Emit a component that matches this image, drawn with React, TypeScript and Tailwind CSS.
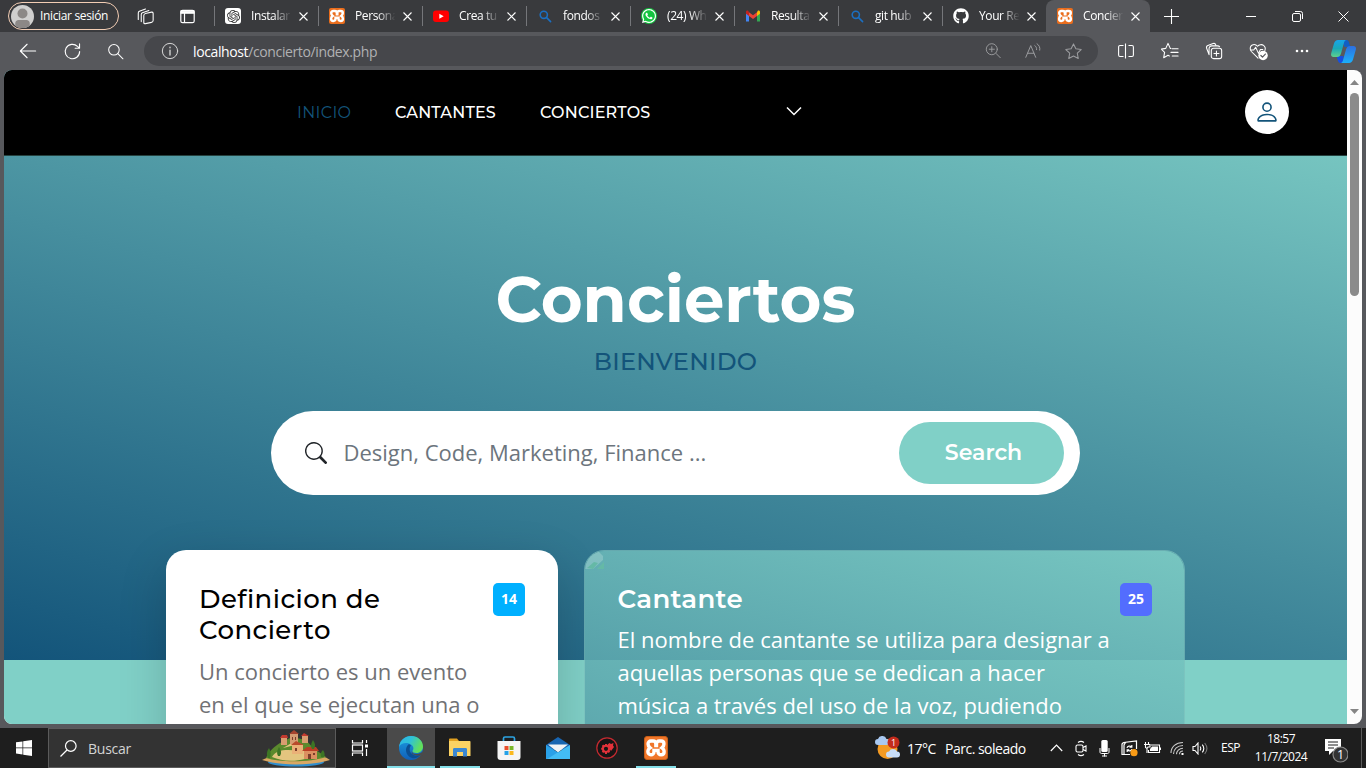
import React from "react";
import { SiOpenai } from "react-icons/si";
import { FaGithub, FaWhatsapp } from "react-icons/fa";
import { BsSearch, BsPerson } from "react-icons/bs";

type Kids = { children?: React.ReactNode };

function Ico({ s = 20, w = 1.1, className = "", children }: { s?: number; w?: number; className?: string } & Kids) {
  return (
    <svg width={s} height={s} viewBox="0 0 20 20" fill="none" stroke="currentColor" strokeWidth={w} strokeLinecap="round" strokeLinejoin="round" className={"shrink-0 " + className}>
      {children}
    </svg>
  );
}

function Xampp({ size }: { size: "sm" | "lg" }) {
  return (
    <span className={size === "sm" ? "flex size-4 items-center justify-center rounded-[2px] bg-[#ea6d1c] text-white" : "flex size-6 items-center justify-center rounded-[3px] border border-[#c95f17] bg-[#f0762a] text-white"}>
      <svg viewBox="1.5 1.5 13 13" className={size === "sm" ? "size-4" : "size-[22px]"} fill="none" stroke="white" strokeWidth="2">
        <path d="M5 3.900h1.300c1 0 1.600.7 1.600 1.700v.9h.4v-.9c0-1 .6-1.700 1.600-1.700H11c1 0 1.700.7 1.700 1.700 0 1-.5 1.700-1.200 2.300.8.5 1.300 1.300 1.300 2.300 0 1.100-.8 1.800-1.800 1.800s-1.800-.7-1.800-1.700V9.400H6.800v.9c0 1-.8 1.700-1.800 1.700s-1.800-.8-1.800-1.800c0-1 .5-1.800 1.300-2.300-.7-.6-1.200-1.300-1.200-2.300 0-1 .7-1.700 1.700-1.700z" />
      </svg>
    </span>
  );
}

const BlueSearch = () => (
  <Ico s={16} w={2} className="text-[#1b6fc2]"><circle cx="8.500" cy="8.500" r="4.500" /><path d="M12 12l5 5" /></Ico>
);

const tabs = [
  { title: "Instalar", icon: <span className="flex size-4 items-center justify-center rounded-[3px] bg-white text-[#333]"><SiOpenai size={13} /></span> },
  { title: "Persona", icon: <Xampp size="sm" /> },
  { title: "Crea tu", icon: <svg width="16" height="16" viewBox="0 0 16 16"><rect y="2.500" width="16" height="11.500" rx="3" fill="#f00" /><path d="M6.300 5.700l4.400 2.500-4.400 2.500z" fill="#fff" /></svg> },
  { title: "fondos", icon: <BlueSearch /> },
  { title: "(24) Wh", icon: <span className="flex size-4 items-center justify-center rounded-full bg-[#13c43f] text-white"><FaWhatsapp size={16} /></span> },
  { title: "Resulta", icon: <svg width="16" height="16" viewBox="0 0 16 16"><path d="M1 4v9.500h3V7L1 4z" fill="#4285f4" /><path d="M12 7v6.500h3V4l-3 3z" fill="#34a853" /><path d="M12 4.200V8l3-2.300V4c0-1.300-1.300-1.800-2.200-1.200z" fill="#fbbc04" /><path d="M4 8V4.200l4 3 4-3V8l-4 3z" fill="#ea4335" /><path d="M1 5.700L4 8V4.200L3.200 2.800C2.300 2.200 1 2.700 1 4z" fill="#c5221f" /></svg> },
  { title: "git hub", icon: <BlueSearch /> },
  { title: "Your Re", icon: <FaGithub size={16} className="text-white" /> },
];

const Close = () => <svg width="9" height="9" viewBox="0 0 9 9" stroke="white" strokeWidth="1.100" className="shrink-0"><path d="M.5.5l8 8M8.500.5l-8 8" /></svg>;

function TabBody({ title, icon }: { title: string; icon: React.ReactNode }) {
  return (
    <>
      <span className="flex w-4 shrink-0 justify-center">{icon}</span>
      <span className="ml-2.5 w-[45px] text-[12px] tracking-[-0.4px] whitespace-nowrap [mask-image:linear-gradient(to_right,black_50%,transparent_90%)]">{title}</span>
      <span className="ml-[3px]"><Close /></span>
    </>
  );
}

function TabStrip() {
  return (
    <div className="flex h-8 items-center bg-[#393a3d] text-white">
      <div className="ml-2 flex h-7 w-[111px] items-center rounded-full border border-[#f3cdb4] pl-[2px]">
        <svg width="23" height="23" viewBox="0 0 23 23"><clipPath id="av"><circle cx="11.500" cy="11.500" r="11.500" /></clipPath><g clipPath="url(#av)"><rect width="23" height="23" fill="#d0cfce" /><circle cx="11.500" cy="8.500" r="5" fill="#8c8886" /><path d="M5 23c-2-6 0-8 3-8h7c3 0 5 2 3 8z" fill="#8c8886" /></g></svg>
        <span className="ml-[6px] text-[12px] tracking-[-0.35px] whitespace-nowrap">Iniciar sesión</span>
      </div>
      <span className="ml-[16px] flex w-5 justify-center"><Ico s={17} w={1.250}>
        <rect x="8" y="6" width="11" height="12" rx="2" transform="skewY(-12) translate(0 2.500)" /><path d="M5 16V7.500c0-1 .5-1.700 1.400-2L14 3M1.500 13.500V5.800c0-1 .5-1.600 1.300-1.900L10 1.200" />
      </Ico></span>
      <span className="ml-[22px] flex w-5 justify-center"><svg width="15" height="15" viewBox="0 0 15 15" fill="none" stroke="white" strokeWidth="1.200"><rect x=".8" y="1.300" width="13.400" height="12.400" rx="1.800" /><path d="M1 2.200h13v2H1z" fill="white" /><path d="M4.500 4v10" /></svg></span>
      <div className="ml-[17px] flex">
        {tabs.map((t) => (
          <div key={t.title} className="flex h-8 w-[104px] items-center">
            <span className="mr-[10px] h-5 w-px bg-[#75767a]" />
            <TabBody {...t} />
          </div>
        ))}
      </div>
      <div className="flex h-8 w-[104px] items-center rounded-t-[8px] bg-[#57585c] pl-[11px]">
        <TabBody title="Concier" icon={<Xampp size="sm" />} />
      </div>
      <svg width="15" height="15" viewBox="0 0 15 15" stroke="white" strokeWidth="1.100" className="ml-[14px]"><path d="M7.500 0v15M0 7.500h15" /></svg>
      <svg width="10" height="10" viewBox="0 0 10 10" stroke="white" strokeWidth="1" className="ml-[67px]"><path d="M0 5.500h10" /></svg>
      <svg width="11" height="11" viewBox="0 0 11 11" fill="none" stroke="white" className="ml-[36px]"><rect x=".5" y="2.500" width="8" height="8" rx="1.500" /><path d="M3 .5h5.500a2 2 0 0 1 2 2V8" /></svg>
      <svg width="11" height="11" viewBox="0 0 11 11" stroke="white" className="ml-[35px]"><path d="M.5.5l10 10M10.500.5l-10 10" /></svg>
    </div>
  );
}

const Slot = ({ children }: Kids) => <span className="flex w-11 shrink-0 items-center justify-center">{children}</span>;
const STAR = "M10 2l2.500 5.100 5.600.8-4.100 3.900 1 5.600-5-2.700-5 2.700 1-5.600L1.900 7.900l5.600-.8z";

function AddressBar() {
  return (
    <div className="flex h-[38px] items-center bg-[#57585c] pl-1.5 text-white">
      <Slot><Ico s={18} w={1.200}><path d="M18.500 10H1.500M9 2.500L1.500 10 9 17.500" /></Ico></Slot>
      <Slot><Ico s={19} w={1.200}><path d="M17.500 10a7.600 7.600 0 1 1-2.300-5.400L17.300 6.500M17.400 2v4.600h-4.600" /></Ico></Slot>
      <Slot><Ico s={17} w={1.200}><circle cx="7" cy="8" r="6.200" /><path d="M11.600 12.600l6 6" /></Ico></Slot>
      <div className="ml-1.5 flex h-[30px] w-[954px] items-center rounded-full bg-[#46474b] pl-[17px]">
        <Ico s={18} w={1.100} className="text-[#d8d8d8]"><circle cx="10" cy="10" r="8.500" /><path d="M10 9v5.500M10 5.800v.6" strokeWidth="1.500" /></Ico>
        <span className="ml-[14px] text-[14px] tracking-[-0.38px] text-[#b0b1b3]"><span className="text-white">localhost</span>/concierto/index.php</span>
        <div className="ml-auto flex w-[120px] text-[#9b9c9f]">
          <span className="flex w-[30px] justify-center"><Ico s={17}><circle cx="8" cy="8.500" r="6.500" /><path d="M13 13.500l5 5M8 5.500v6M5 8.500h6" /></Ico></span>
          <span className="ml-[10px] flex w-[30px] justify-center"><Ico s={18}><path d="M2 17L7.500 4l5.500 13M4 12.500h7M12 4c1.500 1 2.200 2.500 2 4.500M14.500 2c2.500 1.700 3.500 4 3 7" /></Ico></span>
          <span className="ml-[10px] flex w-[30px] justify-center"><Ico s={19}><path d={STAR} /></Ico></span>
        </div>
      </div>
      <span className="ml-1.5 flex">
        <Slot><svg width="16" height="16" viewBox="0 0 16 16" fill="none" stroke="white" strokeWidth="1.100"><path d="M5.500 2.500H2c-.8 0-1.400.6-1.400 1.400v8.200c0 .8.6 1.400 1.400 1.400h3.500M10.500 2.500H14c.8 0 1.400.6 1.400 1.400v8.200c0 .8-.6 1.400-1.400 1.400h-3.500M7.500 .5v15" /></svg></Slot>
        <Slot><Ico s={18} w={1.200}><path d="M11 7.300l-.7-.2L7.800 1.500 5.300 7.100l-5 .8L4 11.500l-1 5.900 4.800-2.700 1.500.8M12.500 7.500H19M11 11.500H19M12.500 15.500h6.500" /></Ico></Slot>
        <Slot><Ico s={18} w={1.200}><rect x="7" y="7" width="11.500" height="11.500" rx="2.500" /><path d="M12.700 10v5.500M10 12.700h5.500M4.500 14L1.800 7C1.400 5.700 2 4.500 3.200 4L9 1.800c1.300-.5 2.500.1 3 1.400M4.500 14V7.500C4.500 5.500 5.800 4.300 7.500 4.300H14c1 0 1.800.4 2.200 1" /></Ico></Slot>
        <Slot><Ico s={19}><path d="M9.500 17L2.500 10C.6 7.800 1 4.700 3 3.400c2-1.200 4.500-.7 6 1.100 1.500-1.800 4.500-2.300 6.300-1 1.700 1.300 2.200 3.400 1.400 5.500M1.500 8.500H5l2-3 3 6.500 2-4h2.500" /><circle cx="14.800" cy="14.200" r="5" fill="white" stroke="none" /><path d="M12.500 14.200l1.700 1.700 3-3.200" stroke="#57585c" strokeWidth="1.300" /></Ico></Slot>
        <Slot><svg width="14" height="4" viewBox="0 0 14 4" fill="white"><circle cx="2" cy="2" r="1.300" /><circle cx="7" cy="2" r="1.300" /><circle cx="12" cy="2" r="1.300" /></svg></Slot>
      </span>
      <svg width="25" height="23" viewBox="0 0 25 23" className="ml-[7px]">
        <defs>
          <linearGradient id="cp1" x1="0" y1="0" x2="0" y2="1"><stop offset="0" stopColor="#18a5ea" /><stop offset=".5" stopColor="#19a8b8" /><stop offset="1" stopColor="#5fd08a" /></linearGradient>
          <linearGradient id="cp2" x1="0" y1="0" x2="0" y2="1"><stop offset="0" stopColor="#2d6fe0" /><stop offset="1" stopColor="#1cb0fa" /></linearGradient>
        </defs>
        <path d="M11 0h4.500c2 0 2.500 2 3 4l1 3h-6z" fill="#125fc4" /><path d="M13 23H9.500c-2 0-2.600-2-3.100-4L5.500 16h7z" fill="#174fe0" />
        <path d="M7 0h8.500c-1.500 0-2.200 1.500-2.700 3.500L10 13.500C9.300 16 8 17 6 17H2.500C.3 17-.3 15.500.2 13.300L3 3.500C3.700 1.200 5 0 7 0z" fill="url(#cp1)" />
        <path d="M18 23H9.500c1.500 0 2.200-1.500 2.700-3.500l2.800-10C15.700 7 17 6 19 6h3.500c2.200 0 2.800 1.500 2.300 3.700L22 19.500C21.300 21.800 20 23 18 23z" fill="url(#cp2)" />
      </svg>
    </div>
  );
}

function WebNav() {
  return (
    <nav className="flex h-[86px] items-center border-b border-[#25423f] bg-black pr-[58px] pl-[293px] font-['Montserrat',sans-serif] text-[16px] font-medium text-white">
      <span className="w-[98px] pt-px font-normal tracking-[0.35px] text-[#13547a]">INICIO</span>
      <span className="w-[145px] pt-px tracking-[0.17px]">CANTANTES</span>
      <span className="w-[246px] pt-px tracking-[0.2px]">CONCIERTOS</span>
      <svg width="16" height="10" viewBox="0 0 16 10" fill="none" stroke="white" strokeWidth="1.500" className="-mt-1"><path d="M1 1.500l7 7 7-7" /></svg>
      <span className="-mt-px mb-px ml-auto flex size-11 items-center justify-center rounded-full bg-white text-[#13547a]"><BsPerson size={26} /></span>
    </nav>
  );
}

function WebPage() {
  return (
    <div className="h-full w-[1343px] shrink-0 overflow-hidden bg-white">
      <section className="h-[590px] bg-[linear-gradient(15deg,#13547a_0%,#80d0c7_100%)]">
        <WebNav />
        <div className="flex flex-col items-center pt-[104px]">
          <h1 className="h-[78px] font-['Montserrat',sans-serif] text-[64px] leading-[78px] font-bold whitespace-nowrap text-white">Conciertos</h1>
          <h2 className="mt-[8px] font-['Montserrat',sans-serif] text-[24px] leading-[32px] font-medium tracking-[0.3px] text-[#13547a]">BIENVENIDO</h2>
          <div className="mt-[33px] flex h-[84px] w-[809px] items-center rounded-full bg-white pr-4 pl-[34px]">
            <BsSearch size={22} className="text-[#212529]" />
            <span className="ml-[16.5px] pb-[2px] font-['Open_Sans',sans-serif] text-[22px] text-[#6c757d]">Design, Code, Marketing, Finance ...</span>
            <span className="ml-auto flex h-[62px] w-[165px] items-center justify-center rounded-full bg-[#80d0c7] pb-[2px] pl-1 font-['Montserrat',sans-serif] text-[22px] font-semibold text-white">Search</span>
          </div>
        </div>
      </section>
      <section className="flex h-[900px] items-start gap-[26px] bg-[#80d0c7] pl-[162px]">
        <article className="relative -mt-[110px] flex h-[620px] w-[392px] justify-between rounded-[20px] bg-white px-[33px] pt-[34px] shadow-[0_16px_48px_rgba(0,0,0,0.175)]">
          <div className="whitespace-nowrap">
            <h3 className="font-['Montserrat',sans-serif] text-[26px] leading-[31px] font-medium tracking-[0.45px] text-black">Definicion de<br />Concierto</h3>
            <p className="mt-[9px] font-['Open_Sans',sans-serif] text-[22px] leading-[33px] text-[#717275]">Un concierto es un evento<br />en el que se ejecutan una o</p>
          </div>
          <span className="-mt-px flex h-[33px] w-8 shrink-0 justify-center rounded-[5px] bg-[#00b0ff] pt-[6px] font-['Open_Sans',sans-serif] text-[14px] leading-[20px] font-bold text-white">14</span>
        </article>
        <article className="relative -mt-[110px] h-[760px] w-[601px] overflow-hidden rounded-[20px] border border-[#7abfbc]/70">
          <div className="flex h-full justify-between bg-[linear-gradient(15deg,rgba(19,84,122,0.85)_0%,rgba(128,208,199,0.85)_100%)] px-8 pt-8 text-white">
            <div className="pl-[0.5px] whitespace-nowrap">
              <h3 className="pt-px font-['Montserrat',sans-serif] text-[26px] leading-[31px] font-semibold tracking-[0.3px]">Cantante</h3>
              <p className="mt-[8px] font-['Open_Sans',sans-serif] text-[22px] leading-[33px]">El nombre de cantante se utiliza para designar a<br />aquellas personas que se dedican a hacer<br />música a través del uso de la voz, pudiendo</p>
            </div>
            <span className="flex h-[33px] w-8 shrink-0 justify-center rounded-[5px] bg-[#536dfe] pt-[6px] font-['Open_Sans',sans-serif] text-[14px] leading-[20px] font-bold">25</span>
          </div>
          <svg width="19" height="18" viewBox="0 0 19 18" className="absolute top-0 left-0 opacity-50"><path d="M0 0h13l5 5v4L8 18H0z" fill="#9fd0cf" /><path d="M2 17l7-6 4 1-5 6z" fill="#69c39a" /><path d="M12 18l7-7v7z" fill="#69c39a" /></svg>
        </article>
      </section>
    </div>
  );
}

function Island() {
  return (
    <svg width="70" height="38" viewBox="0 0 70 38">
      <ellipse cx="35" cy="33" rx="28" ry="4.500" fill="#2f8fd0" />
      <path d="M1 31c8-4 12-4 22-6l34 1c6 1 9 3 12 5-18 6-50 6-68 0z" fill="#d9a763" />
      <path d="M5 29c3-7 9-12 14-15l12-6 14 3 7 8 13 9c-14 5-44 6-60 1z" fill="#5b8a2d" />
      <path d="M11 28c4-8 16-8 27-6l-4-6-12 3 12-7 6 8 12 5-8 5c-12 3-24 2-33-2z" fill="#e3c57f" />
      <path d="M29 5h8v10h-8z" fill="#d69b72" /><path d="M28 5l5-4 5 4z" fill="#a8432e" />
      <path d="M20 9h6v7h-6zM41 7h6v7h-6z" fill="#d99d70" /><path d="M19 9l2-3h5l1 3zM40 7l3-3 5 3z" fill="#c33a2f" />
      <path d="M31 16h11v9H31z" fill="#eab077" /><path d="M30 16l5-4 8 4z" fill="#b94a2b" />
      <path d="M43 22h13v8H43z" fill="#dc8f60" /><path d="M41 22l5-4h9l3 4z" fill="#bb3e25" />
      <path d="M34 19h2v3h-2zM47 25h3v5h-3zM52 24h2v2h-2zM31 8h1v3h-1zM34 8h1v3h-1z" fill="#7d3d2b" />
      <path d="M17 27c-2-4 0-7 1-9 2 3 3 6 1 9zM7 29c-2-4-1-7 1-10 2 3 2 7 1 10zM51 20c-2-4 0-7 1-9 2 3 3 6 1 9zM60 28c-1-3 0-5 2-7 2 3 2 5 1 7z" fill="#3d7524" />
    </svg>
  );
}

function TaskApp({ active = false, run = false, children }: { active?: boolean; run?: boolean } & Kids) {
  return (
    <span className={"flex h-10 w-12 flex-col items-center " + (active ? "bg-[#4a4a4a]" : "")}>
      <span className="flex h-[38px] items-center pt-0.5">{children}</span>
      {(active || run) && <span className={"h-0.5 bg-[#84dfe9] " + (active ? "w-12" : "w-10")} />}
    </span>
  );
}

function Taskbar() {
  return (
    <div className="flex h-10 items-center bg-[#1e1e1e] text-white">
      <span className="flex w-12 justify-center"><svg width="16" height="16" viewBox="0 0 16 16" fill="white"><path d="M0 2.300l6.500-.9v6.200H0zM7.200 1.300L16 0v7.600H7.200zM0 8.300h6.500v6.200L0 13.600zM7.200 8.300H16V16l-8.800-1.300z" /></svg></span>
      <div className="flex h-10 w-72 items-center border border-[#5b5b5b] bg-[#333333] pl-[11px]">
        <svg width="17" height="17" viewBox="0 0 17 17" fill="none" stroke="white" strokeWidth="1.200"><circle cx="10.800" cy="6" r="5.300" /><path d="M7 10L.5 16.500" /></svg>
        <span className="ml-[11px] text-[14px] tracking-[-0.25px] text-[#d4d4d4]">Buscar</span>
        <span className="mr-[4px] ml-auto"><Island /></span>
      </div>
      <span className="mr-[3px] flex w-12 justify-center"><svg width="18" height="16" viewBox="0 0 18 16" fill="none" stroke="white" strokeWidth="1.200"><path d="M1.500 0v3h10V0M1.500 16v-3h10v3" /><rect x="1.500" y="5" width="10" height="6" /><path d="M15.500 0v3M15.500 9v7" /><path d="M14 4.500h3v3h-3z" fill="white" stroke="none" /></svg></span>
      <div className="flex gap-px">
        <TaskApp active>
          <svg width="24" height="24" viewBox="0 0 24 24">
            <defs><linearGradient id="eg" x1="0" y1="0" x2="1" y2=".4"><stop offset="0" stopColor="#2cb5e8" /><stop offset=".5" stopColor="#2fc1d8" /><stop offset="1" stopColor="#62e05a" /></linearGradient><linearGradient id="eb" x1="0" y1="0" x2="0" y2="1"><stop offset="0" stopColor="#1b9de2" /><stop offset="1" stopColor="#1160b8" /></linearGradient></defs>
            <circle cx="12" cy="12" r="12" fill="url(#eb)" />
            <path d="M0 11C1 4 6 0 12 0c7 0 12 5 12 10.500 0 4-3 6.500-6.500 6.500-3 0-4.500-1-4-2.200 1.800-2 1.200-5.800-3.500-7.300C5.500 6.200 1.500 8 0 11z" fill="url(#eg)" />
            <path d="M10 8c-4 3-4 9 0 12.500 4 3 9 2 12-2-4 2-8 1-10-1.500C10 14.500 10.500 11 12 9.500z" fill="#0b4f93" />
            <path d="M13.500 14c-1.500 2.500 1 4.500 5 4 2-.3 3.500-1 5-2.500v4h-2c-5 .5-11-1-8-5.500z" fill="#4a4a4a" />
          </svg>
        </TaskApp>
        <TaskApp run>
          <svg width="22" height="20" viewBox="0 0 22 20"><path d="M0 1.500C0 .7.500.5 1 .5h7l2 2.500H0z" fill="#e2a121" /><path d="M0 3h20.500c.7 0 1 .3 1 1v14H0z" fill="#fbd263" /><path d="M4 18.500v-7c0-1 .5-1.500 1.500-1.500h11c1 0 1.500.5 1.500 1.500v7h-4V14H8v4.500z" fill="#3a87d2" /></svg>
        </TaskApp>
        <TaskApp>
          <svg width="24" height="24" viewBox="0 0 24 24"><path d="M6.500 6V2.500C6.500 1.500 7 1 8 1h8c1 0 1.500.5 1.500 1.500V6" fill="none" stroke="#2da4e2" strokeWidth="1.700" /><path d="M.5 5h23v16c0 2-1 3-3 3h-17c-2 0-3-1-3-3z" fill="#f5f5f5" /><path d="M7.500 10H11.500v4H7.500z" fill="#e94f2b" /><path d="M12.500 10h4v4h-4z" fill="#79b829" /><path d="M7.500 15h4v4h-4z" fill="#26a2e8" /><path d="M12.500 15h4v4h-4z" fill="#fbb91c" /></svg>
        </TaskApp>
        <TaskApp>
          <svg width="24" height="22" viewBox="0 0 24 22"><path d="M0 8L12 0l12 8v5H0z" fill="#1866b2" /><path d="M2 7.500h20l-10 8z" fill="#f0f3f6" /><path d="M0 8l13 8-11 6H0z" fill="#2aa1e8" /><path d="M24 8v14H1z" fill="#43bdf5" /></svg>
        </TaskApp>
        <TaskApp>
          <svg width="22" height="22" viewBox="0 0 22 22">
            <circle cx="11" cy="11" r="10.200" fill="#171515" stroke="#c52a30" strokeWidth="1.200" />
            <circle cx="10" cy="11.800" r="3.100" fill="none" stroke="#e3323a" strokeWidth="2" />
            <path d="M10 7v1.500M10 15v2M5.200 11.800h1.500M6.500 8.300l1.200 1.200M6.500 15.300l1.200-1.200M13.500 15.300l-1.200-1.200" stroke="#e3323a" strokeWidth="2" />
            <path d="M11.500 7.500l2-1.500 1.500 1 2.500-1-.5 2.500 1 1.500-3 4-1.800-2.500z" fill="#e3323a" />
          </svg>
        </TaskApp>
        <TaskApp run><Xampp size="lg" /></TaskApp>
      </div>
      <div className="ml-[195px] flex items-center">
        <svg width="26" height="24" viewBox="0 0 26 24"><circle cx="12.500" cy="13" r="10" fill="#f39a22" /><path d="M3 9a3 3 0 0 1 0-6 4.500 4.500 0 0 1 8.500 0 3 3 0 0 1 0 6z" fill="#a9c8f0" /><path d="M14 21.500a3 3 0 0 1 0-6 4.500 4.500 0 0 1 8 0 3 3 0 0 1 0 6z" fill="#c7dcf7" /><circle cx="18.500" cy="6.500" r="6" fill="#c42b1c" /><text x="18.500" y="10" textAnchor="middle" fontSize="9" fill="white" fontFamily="Open Sans">1</text></svg>
        <span className="ml-[6px] w-[38px] text-[14px] tracking-[-0.5px]">17°C</span>
        <span className="w-[105px] text-[14px] tracking-[-0.5px] whitespace-nowrap">Parc. soleado</span>
        <span className="flex w-[13px] justify-center"><svg width="13" height="8" viewBox="0 0 13 8" fill="none" stroke="white" strokeWidth="1.200"><path d="M.8 7l5.700-6 5.700 6" /></svg></span>
        <span className="ml-[12px]"><svg width="12" height="17" viewBox="0 0 12 17" fill="none" stroke="white" strokeWidth="1.100"><rect x="1" y="5" width="7" height="7" rx="1.500" /><path d="M8 7.500l3-1.500v5l-3-1.500M3 2.500c2-1.500 4-1.500 6 0M3 14.500c2 1.500 4 1.500 6 0" /></svg></span>
        <span className="ml-[12px]"><svg width="11" height="17" viewBox="0 0 11 17" fill="white"><rect x="2.300" y="0" width="6.400" height="12" rx="1.500" /><path d="M1 8v4c0 1 .7 1.500 1.500 1.500h6C9.300 13.500 10 13 10 12V8M5.500 13.500v3M3 16h5" fill="none" stroke="white" /></svg></span>
        <span className="ml-[11px]"><svg width="18" height="17" viewBox="0 0 18 17" fill="none" stroke="white" strokeWidth="1.200"><path d="M2.500 14.500H1V4l1.500-1.500M1 14.500h8M2.500 2.500L15.500 1v8M3 14.300V5l1.500-2.600" /><path d="M6 7.800c.5-1.800 3-2.300 4.500-.8M10.800 5v2.200H8.500M11 9.200c-.5 1.800-3 2.300-4.500.8M6.200 12V9.800h2" /><circle cx="13" cy="12.700" r="3.600" fill="#f99b16" stroke="none" /></svg></span>
        <span className="ml-[5px]"><svg width="17" height="12" viewBox="0 0 17 12" fill="none" stroke="white" strokeWidth="1.100"><path d="M7 3h8.500v7.500h-11V8M16.500 5.500v2.500" /><path d="M8 4.500h6V9H6V7z" fill="white" stroke="none" /><path d="M1.500 0v2M4.500 0v2M0 2.500h6V5H4L3 6.500 1.500 5.500V3M3 6v5" /></svg></span>
        <span className="ml-[9px]"><svg width="14" height="14" viewBox="0 0 14 14" fill="none" stroke="#c9c9c9" strokeWidth="1.100"><path d="M1 12C1 5.500 6 1.500 13 1.500M3.500 13c0-5 4-8.500 9.500-8.500M6.500 13.300c0-3.300 2.500-6 6.500-6M9.500 13.300c0-1.800 1.300-3.300 3.500-3.300" /><path d="M11.500 12h2v2h-2z" fill="white" stroke="none" /></svg></span>
        <span className="ml-[8px]"><svg width="17" height="13" viewBox="0 0 17 13" fill="none" stroke="white" strokeWidth="1.100"><path d="M1 4.500h2l3-3.500v11L3 8.500H1zM8 4.500q1.500 2 0 4M10.300 2.700q3 3.800 0 7.600" /><path d="M12.700 1q4.500 5.500 0 11" stroke="#777" /></svg></span>
        <span className="ml-[12px] w-[20px] text-[12px] tracking-[-0.5px]">ESP</span>
        <span className="ml-[13px] flex w-[54px] flex-col items-center text-[12px] leading-[18px] tracking-[-0.5px] whitespace-nowrap"><span>18:57</span><span>11/7/2024</span></span>
        <span className="ml-[16px] h-[25px] w-6 pt-0.5">
          <svg width="24" height="25" viewBox="0 0 24 25"><path d="M1 1h16v12H9l-4 4v-4H1z" fill="white" /><path d="M4 4h10M4 7h10M4 10h6" stroke="#1e1e1e" /><circle cx="16.500" cy="16.500" r="7.500" fill="#333" stroke="#8a8a8a" strokeWidth="1.200" /><text x="16.500" y="21" textAnchor="middle" fontSize="12.500" fill="white" fontFamily="Open Sans">1</text></svg>
        </span>
      </div>
      <span className="mr-1 ml-auto h-10 w-px bg-[#5a5a5a]" />
    </div>
  );
}

export default function App() {
  return (
    <div className="flex h-[768px] w-[1366px] flex-col overflow-hidden bg-[#57585c] font-['Segoe_UI','Open_Sans',sans-serif]">
      <TabStrip />
      <AddressBar />
      <div className="mx-1 mb-1 flex h-[654px] overflow-hidden rounded-[8px]">
        <WebPage />
        <div className="flex w-[15px] flex-col items-center bg-[#fcfcfc]">
          <svg width="9" height="5" viewBox="0 0 9 5" className="mt-[10px]"><path d="M0 5L4.500 0 9 5z" fill="#858585" /></svg>
          <span className="mt-2 h-[203px] w-[9px] rounded-full bg-[#8b8b8b]" />
          <svg width="9" height="5" viewBox="0 0 9 5" className="mt-auto mb-[10px]"><path d="M0 0h9L4.500 5z" fill="#858585" /></svg>
        </div>
      </div>
      <Taskbar />
    </div>
  );
}
